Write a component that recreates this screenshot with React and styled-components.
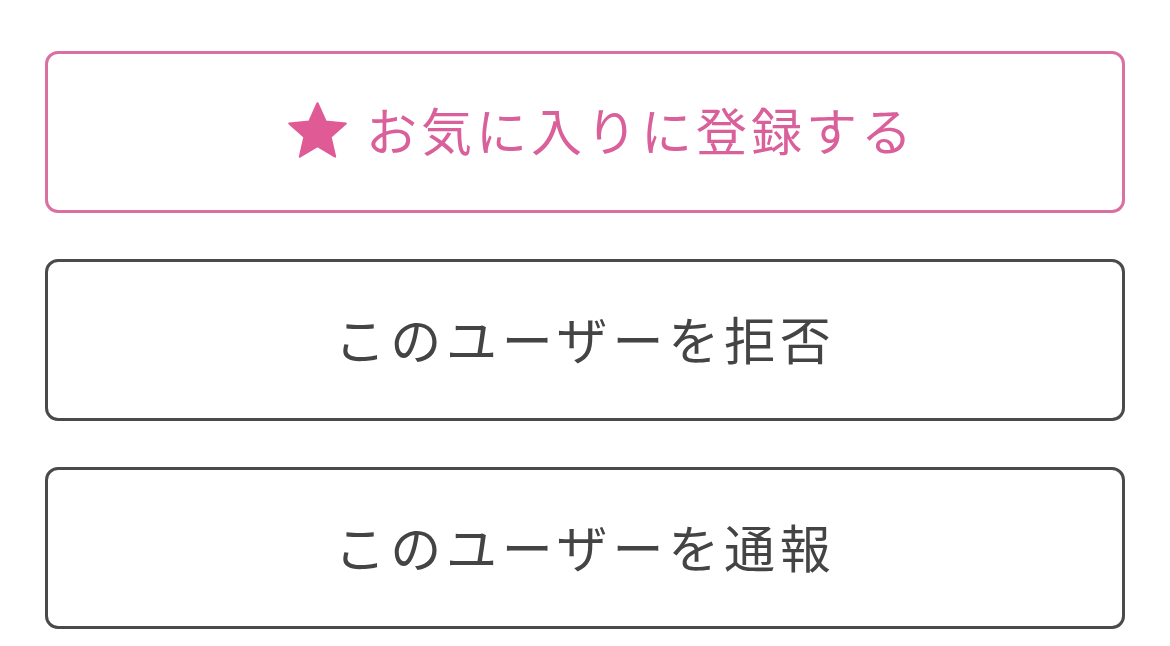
import React from "react";
import styled, { createGlobalStyle } from "styled-components";

const Global = createGlobalStyle`
  html, body { margin: 0; padding: 0; background: #ffffff; }
  body { font-family: "Noto Sans CJK JP", "Noto Sans", sans-serif; }
`;

const Page = styled.div`
  display: flex;
  flex-direction: column;
  gap: 46px;
  padding: 51px 45px 0 45px;
  width: 1080px;
`;

const Button = styled.button`
  box-sizing: border-box;
  height: 162px;
  width: 100%;
  display: flex;
  align-items: center;
  justify-content: center;
  gap: 15px;
  background: #fff;
  border: 3px solid ${(p) => (p.$pink ? "#da6fa1" : "#4a4a4a")};
  border-radius: 13px;
  color: ${(p) => (p.$pink ? "#d9609a" : "#444444")};
  font-family: "Noto Sans CJK JP", "Noto Sans", sans-serif;
  font-size: 51px;
  font-weight: 400;
  letter-spacing: ${(p) => (p.$pink ? "4px" : "4.8px")};
  padding: 0 0 ${(p) => (p.$pink ? "6px" : "5px")} ${(p) => (p.$pink ? "30px" : "0")};
  cursor: pointer;
`;

const Star = styled.svg`
  width: 67px;
  height: 64px;
  flex: none;
  margin-top: 4px;
`;

export default function App() {
  return (
    <>
      <Global />
      <Page>
        <Button $pink>
          <Star viewBox="0 0 24 24">
            <path
              d="M12 1.6l3.1 6.9 7.5.7-5.7 5 1.7 7.4L12 17.7l-6.6 3.9 1.7-7.4-5.7-5 7.5-.7z"
              fill="#e05a96"
              stroke="#e05a96"
              strokeWidth="0.8"
              strokeLinejoin="round"
            />
          </Star>
          <span>お気に入りに登録する</span>
        </Button>
        <Button>このユーザーを拒否</Button>
        <Button>このユーザーを通報</Button>
      </Page>
    </>
  );
}
